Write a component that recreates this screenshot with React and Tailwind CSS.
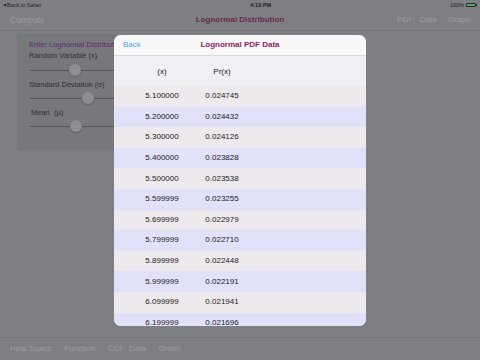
import React from "react";

const rows = [
  ["5.100000", "0.024745"],
  ["5.200000", "0.024432"],
  ["5.300000", "0.024126"],
  ["5.400000", "0.023828"],
  ["5.500000", "0.023538"],
  ["5.599999", "0.023255"],
  ["5.699999", "0.022979"],
  ["5.799999", "0.022710"],
  ["5.899999", "0.022448"],
  ["5.999999", "0.022191"],
  ["6.099999", "0.021941"],
  ["6.199999", "0.021696"],
];

function Slider({ thumb }) {
  return (
    <div className="relative h-[14px] w-[260px]">
      <div className="absolute left-[13px] right-0 top-[7px] h-px bg-[#55565a]" />
      <div
        className="absolute top-[1px] h-[12px] w-[12px] rounded-full bg-[#8d8e92] shadow-[0_1px_2px_rgba(0,0,0,0.25)]"
        style={{ left: thumb }}
      />
    </div>
  );
}

export default function App() {
  return (
    <div
      className="relative flex h-[360px] w-[480px] flex-col overflow-hidden bg-[#7e7f83]"
      style={{ fontFamily: '"Liberation Sans", Arial, sans-serif' }}
    >
      {/* status bar */}
      <div className="flex h-[10px] items-center justify-between px-[3px] text-[5.5px] text-[#1f1f22]">
        <span className="flex items-center gap-[1px]">
          <span className="text-[4px]">◀</span>Back to Safari
        </span>
        <span className="pl-[30px] font-bold">4:19 PM</span>
        <span className="flex items-center gap-[2px]">
          100%
          <span className="flex items-center">
            <span className="block h-[4px] w-[10px] rounded-[1px] border border-[#2a2a2a] p-[0.5px]">
              <span className="block h-full w-full bg-[#35c34a]" />
            </span>
            <span className="block h-[2px] w-[1px] bg-[#2a2a2a]" />
          </span>
        </span>
      </div>

      {/* nav bar */}
      <div className="flex h-[21px] items-center border-b border-[#727377] px-[10px] text-[8.5px]">
        <span className="w-[100px] text-[#9c9da1]">Compute</span>
        <span className="flex-1 text-center text-[8px] font-bold text-[#6a2a4f]">
          Lognormal Distribution
        </span>
        <span className="flex w-[100px] justify-end gap-[11px] text-[8px] text-[#9c9da1]">
          <span>PDF:&nbsp; Data</span>
          <span>Graph</span>
        </span>
      </div>

      {/* main */}
      <div className="flex-1 pl-[17px] pt-[3px]">
        <div className="h-[117px] w-[100px] overflow-hidden whitespace-nowrap bg-[#77787c] pl-[12px] pt-[5px] text-[7.5px]">
          <div className="text-[#5b2b6e]">Enter Lognormal Distribution Parameters</div>
          <div className="text-[#2e2e31]">Random Variable (x)</div>
          <div className="-ml-[12px] mt-[1px]">
            <Slider thumb={52} />
          </div>
          <div className="mt-[2px] text-[#2e2e31]">Standard Deviation (σ)</div>
          <div className="-ml-[12px] mt-[1px]">
            <Slider thumb={65} />
          </div>
          <div className="ml-[2px] mt-[2px] text-[#2e2e31]">Mean&nbsp; (µ)</div>
          <div className="-ml-[12px] mt-[1px]">
            <Slider thumb={53} />
          </div>
        </div>
      </div>

      {/* toolbar */}
      <div className="flex h-[23px] items-center gap-[13px] border-t border-[#76777b] px-[10px] text-[8px] text-[#9c9da1]">
        <span>Help Topics</span>
        <span>Function</span>
        <span>CDF: Data</span>
        <span>Graph</span>
      </div>

      {/* modal */}
      <div className="absolute left-[114px] top-[35px] flex h-[291px] w-[252px] flex-col overflow-hidden rounded-[7px] bg-[#efeff4]">
        <div className="flex h-[21px] shrink-0 items-center border-b border-[#d9d9de] bg-[#f8f8f8] px-[9px] text-[8px]">
          <span className="w-[60px] text-[#4a9ff5]">Back</span>
          <span className="flex-1 text-center font-bold text-[#8a1f5e]">
            Lognormal PDF Data
          </span>
          <span className="w-[60px]" />
        </div>
        <div className="flex h-[30px] shrink-0 items-center pl-[18px] pt-[1px] text-[8px] text-[#222]">
          <span className="w-[60px] text-center">(x)</span>
          <span className="w-[60px] text-center">Pr(x)</span>
        </div>
        {rows.map(([x, p], i) => (
          <div
            key={x}
            className={
              "flex h-[20.6px] shrink-0 items-center pl-[18px] text-[8px] text-[#222] " +
              (i % 2 === 0 ? "bg-[#eee9ec]" : "bg-[#e1e1fa]")
            }
          >
            <span className="w-[60px] text-center">{x}</span>
            <span className="w-[60px] text-center">{p}</span>
          </div>
        ))}
      </div>
    </div>
  );
}
